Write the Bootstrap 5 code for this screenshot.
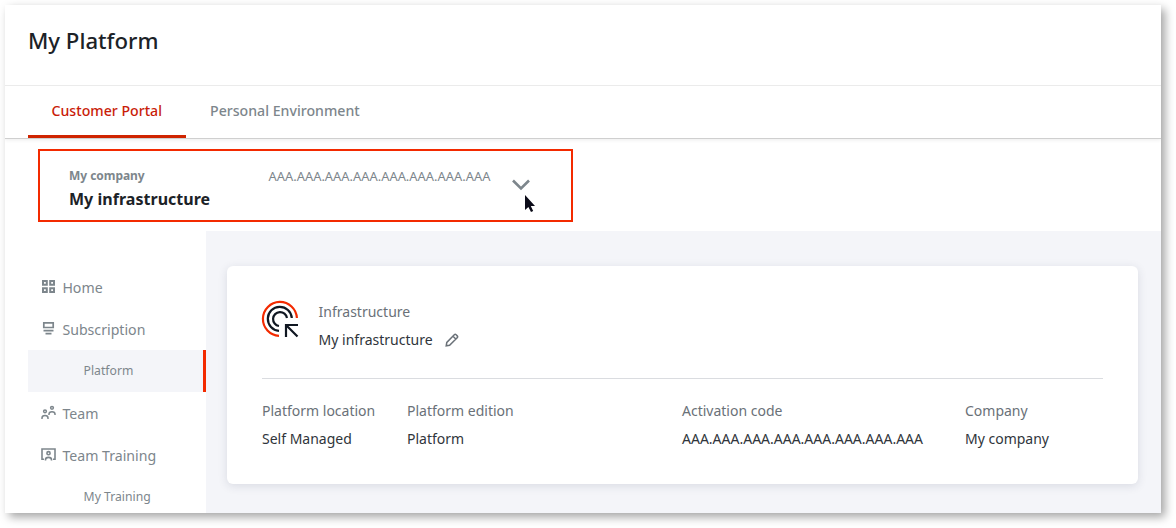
<!DOCTYPE html>
<html lang="en">
<head>
<meta charset="utf-8">
<meta name="viewport" content="width=device-width, initial-scale=1">
<title>My Platform</title>
<link href="https://cdn.jsdelivr.net/npm/bootstrap@5.3.0/dist/css/bootstrap.min.css" rel="stylesheet">
<style>
  body { font-family: "Noto Sans", "Open Sans", sans-serif; font-size: 14px; line-height: 20px; color: #272b30; background: #fff; overflow: hidden; padding: 5px; height: 528px; }
  .frame { width: 1156px; height: 508px; box-shadow: 4px 4px 9px rgba(0,0,0,.36); }
  .page-title { height: 81px; padding: 0 23px 8px; border-bottom: 1px solid #ebebeb; }
  .page-title h1 { font-size: 22.2px; font-weight: 500; line-height: 30px; color: #1c2227; }
  .tabs { height: 53px; padding-left: 23px; border-bottom: 1px solid #cfcfcf; box-shadow: 0 1px 4px rgba(0,0,0,.08); clip-path: inset(0 0 -6px 0); }
  .tabs .nav-link { height: 52px; padding: 15px 0 0 24px; font-weight: 500; font-size: 14.15px; color: #7d868c; border-bottom: 3px solid transparent; }
  .tabs .nav-link.active { color: #c91c09; border-color: #cf2400; width: 158px; padding-left: 23.5px; }
  .switch-row { height: 92px; padding: 10px 0 0 33px; }
  .switcher { width: 535px; height: 73px; border: 2px solid #f32a00; padding: 15px 29px 0; }
  .switch-name { width: 199.5px; }
  .owner { font-size: 12px; font-weight: 700; letter-spacing: -.05px; color: #7d868c; }
  .infra { font-size: 16px; font-weight: 700; line-height: 27px; color: #1c2227; letter-spacing: .03px; }
  .code { width: 242.5px; font-size: 12.9px; font-weight: 400; color: #7d868c; }
  .chev { margin-top: 12px; }
  .pointer { position: absolute; left: 13px; top: 16px; }
  .side { width: 201px; padding: 35px 0 0 23px; }
  .side .nav-link { height: 42px; flex-shrink: 0; padding: 2px 0 0 13px; font-size: 14.15px; color: #7d868c; }
  .side svg { margin: 0 6.4px 3px 0; }
  .side .nav-link.sub { font-size: 12.2px; padding: 0 0 0 55.6px; }
  .side .nav-link.active { background: #f4f5f9; border-right: 3px solid #f32a00; }
  .content { background: #f4f5f9; padding: 35px 23px 0 21px; }
  .info-card { height: 218px; border: 0; border-radius: 6px; padding: 35px 35px 0; box-shadow: 0 2px 10px rgba(40,50,80,.13); color: #30353b; }
  .info-top { height: 78px; border-bottom: 1px solid #dadce0; }
  .info-top > svg { margin: -1px 0 0 -1px; }
  .info-name { margin-left: 19.6px; margin-top: -3px; }
  .edit { margin-left: 12px; }
  .lbl { color: #6a7178; line-height: 28px; }
  .val { line-height: 28px; white-space: nowrap; }
  .facts { display: grid; grid-template-columns: 145px 275px 283px 1fr; padding-top: 18px; }
</style>
</head>
<body>
<div class="frame d-flex flex-column bg-white">
  <header class="page-title d-flex align-items-center flex-shrink-0"><h1 class="m-0">My Platform</h1></header>
  <nav class="tabs nav flex-shrink-0">
    <a class="nav-link active" href="#">Customer Portal</a>
    <a class="nav-link" href="#">Personal Environment</a>
  </nav>
  <div class="switch-row flex-shrink-0">
    <div class="switcher d-flex align-items-start">
      <div class="switch-name">
        <div class="owner">My company</div>
        <div class="infra">My infrastructure</div>
      </div>
      <div class="code">AAA.AAA.AAA.AAA.AAA.AAA.AAA.AAA</div>
      <div class="chev position-relative d-flex">
        <svg width="20" height="14" viewBox="0 0 20 14" fill="none" stroke="#7d868c" stroke-width="2.6"><path d="M2 2.500l8 8 8-8"/></svg>
        <svg class="pointer" width="14" height="20" viewBox="0 0 14 20"><path d="M1 1v15l3.400-3 2.600 5 2.200-1-2.400-5H11z" fill="#0b0b18"/></svg>
      </div>
    </div>
  </div>
  <div class="d-flex flex-grow-1 overflow-hidden">
    <nav class="side nav flex-column flex-nowrap flex-shrink-0">
      <a class="nav-link d-flex align-items-center" href="#"><svg width="15" height="15" viewBox="0 0 15 15" fill="none" stroke="#7d868c" stroke-width="2"><path d="M2 2h3.800v3.800H2zM9.200 2H13v3.800H9.200zM2 9.200h3.800V13H2zM9.200 9.200H13V13H9.200z"/></svg>Home</a>
      <a class="nav-link d-flex align-items-center" href="#"><svg width="15" height="15" viewBox="0 0 15 15" fill="none" stroke="#7d868c" stroke-width="1.700"><path d="M2.800 1.800h9.400v4.700H2.800zM2.500 9.600h10M4.500 12.600h6"/></svg>Subscription</a>
      <a class="nav-link sub active d-flex align-items-center" href="#">Platform</a>
      <a class="nav-link d-flex align-items-center" href="#"><svg width="15" height="15" viewBox="0 0 15 15" fill="none" stroke="#7d868c" stroke-width="1.500"><circle cx="4" cy="6.300" r="1.400"/><path d="M1 14v-1c0-1.400 1.200-2.400 3-2.400s3 1 3 2.400v1"/><circle cx="11" cy="2.800" r="1.400"/><path d="M8 10v-1c0-1.400 1.200-2.300 3-2.300s3 .9 3 2.300v1"/></svg>Team</a>
      <a class="nav-link d-flex align-items-center" href="#"><svg width="15" height="15" viewBox="0 0 15 15" fill="none" stroke="#7d868c" stroke-width="1.600"><path d="M3 12.300H1V2h13v10.300h-2"/><circle cx="7.500" cy="6.200" r="1.600"/><path d="M4.500 13.500v-.8c0-1.400 1.200-2.300 3-2.300s3 .9 3 2.300v.8"/></svg>Team Training</a>
      <a class="nav-link sub d-flex align-items-center" href="#">My Training</a>
    </nav>
    <main class="content flex-grow-1">
      <section class="card info-card">
        <div class="info-top d-flex">
          <svg width="38" height="38" viewBox="0 0 38 38" fill="none" stroke-width="2.200"><path d="M18 35.900A17 17 0 1 1 35.900 18" stroke="#f32a00"/><path d="M18 30.800A12 12 0 1 1 30.800 18M18 26A7 7 0 1 1 26 18" stroke="#101722"/><path d="M25 37V25h12M25.500 25.500l11 11" stroke="#101722"/></svg>
          <div class="info-name">
            <div class="lbl">Infrastructure</div>
            <div class="val d-flex align-items-center">My infrastructure<svg class="edit" width="14" height="14" viewBox="0 0 14 14" fill="none" stroke="#6a7178" stroke-width="1.500"><path d="M1.200 12.800l.6-3.400 7.500-7.600q.9-.9 1.800 0l1.100 1.100q.9.900 0 1.800l-7.600 7.500zM8 3.200L10.800 6"/></svg></div>
          </div>
        </div>
        <div class="facts">
          <div><div class="lbl">Platform location</div><div class="val">Self Managed</div></div>
          <div><div class="lbl">Platform edition</div><div class="val">Platform</div></div>
          <div><div class="lbl">Activation code</div><div class="val">AAA.AAA.AAA.AAA.AAA.AAA.AAA.AAA</div></div>
          <div><div class="lbl">Company</div><div class="val">My company</div></div>
        </div>
      </section>
    </main>
  </div>
</div>
<script src="https://cdn.jsdelivr.net/npm/bootstrap@5.3.0/dist/js/bootstrap.bundle.min.js"></script>
</body>
</html>
